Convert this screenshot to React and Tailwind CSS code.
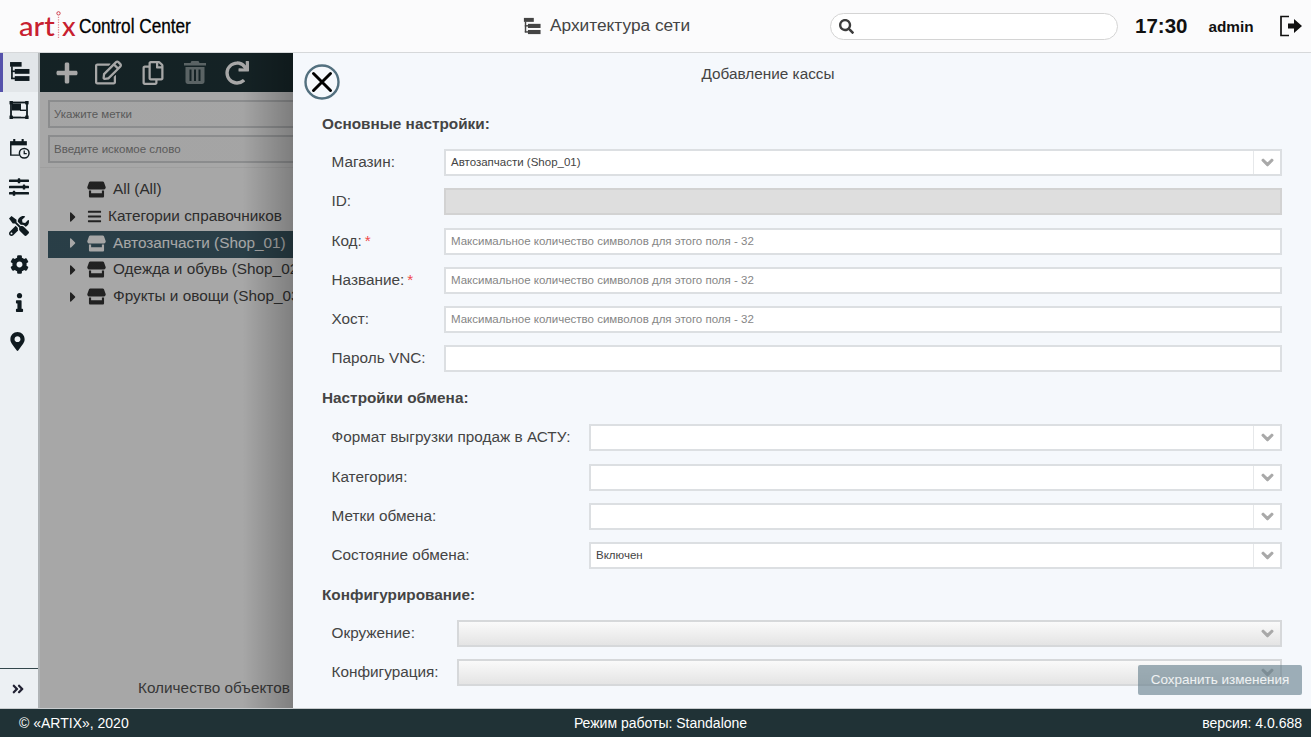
import React from "react";
import {
  FaPlus,
  FaRegEdit,
  FaRegCopy,
  FaRedo,
  FaSearch,
  FaSlidersH,
  FaTools,
  FaCog,
  FaInfo,
  FaMapMarkerAlt,
  FaAngleDoubleRight,
  FaChevronDown,
  FaCaretRight,
  FaBars,
} from "react-icons/fa";

const TreeIcon = ({ className }) => (
  <svg viewBox="0 0 20 20" className={className} fill="currentColor">
    <rect x="1" y="1" width="11" height="4.4" />
    <rect x="5.5" y="7.6" width="14" height="4.6" />
    <rect x="5.5" y="14.4" width="14" height="4.6" />
    <rect x="2" y="5" width="1.6" height="12" />
    <rect x="2" y="9" width="4" height="1.6" />
    <rect x="2" y="15.8" width="4" height="1.6" />
  </svg>
);

const LayersIcon = () => (
  <svg viewBox="0 0 20 20" className="w-[20px] h-[20px]">
    <rect x="2" y="2.5" width="16" height="15" fill="none" stroke="currentColor" strokeWidth="1.8" />
    <rect x="3" y="3.5" width="9" height="7" fill="currentColor" />
    <rect x="12" y="10.5" width="5" height="6" fill="#ecf0f3" />
    <rect x="11" y="9.6" width="6" height="1.4" fill="currentColor" />
    <rect x="0.5" y="1" width="3.4" height="3.4" fill="currentColor" />
    <rect x="16.2" y="1" width="3.4" height="3.4" fill="currentColor" />
    <rect x="0.5" y="15.6" width="3.4" height="3.4" fill="currentColor" />
    <rect x="16.2" y="15.6" width="3.4" height="3.4" fill="currentColor" />
  </svg>
);

const ScheduleIcon = () => (
  <svg viewBox="0 0 20 20" className="w-[21px] h-[21px]">
    <path d="M1 3h16v4H1z" fill="currentColor" />
    <path d="M4 1h2v3H4zM12 1h2v3h-2z" fill="currentColor" />
    <path d="M1.700 6v10.300H10" fill="none" stroke="currentColor" strokeWidth="1.400" />
    <circle cx="14.500" cy="14.500" r="4.600" fill="#ecf0f3" stroke="currentColor" strokeWidth="1.400" />
    <path d="M14.500 11.800v3h2.400" fill="none" stroke="currentColor" strokeWidth="1.200" />
  </svg>
);

const TrashIcon = ({ className }) => (
  <svg viewBox="0 0 22 24" className={className} fill="currentColor">
    <path d="M7.500 0.500h7l1 2H22v2.500H0V2.500h6.500z" />
    <path fillRule="evenodd" d="M1.500 6.500h19V21c0 1.500-1 2.500-2.500 2.500H4c-1.500 0-2.500-1-2.500-2.500zM5.500 9v11.500h2V9zM10 9v11.500h2V9zM14.500 9v11.500h2V9z" />
  </svg>
);

const StoreIcon = ({ className }) => (
  <svg viewBox="0 0 20 18" className={className} fill="currentColor">
    <path d="M3.400 0.500h13.200c.6 0 1 .3 1.300.8L19.800 6.500c0 1.500-1.300 2.500-2.600 2.500H2.800C1.500 9 .2 8 .2 6.500L2.100 1.300c.3-.5.7-.8 1.300-.8z" />
    <path d="M2 10h2.300v3h11.400v-3H18v6.200c0 .8-.6 1.300-1.300 1.300H3.300C2.600 17.500 2 17 2 16.200z" />
  </svg>
);

const LogoutIcon = () => (
  <svg viewBox="0 0 24 24" className="w-[24px] h-[24px]">
    <path d="M10 2.500H2v19h8" fill="none" stroke="#111" strokeWidth="1.700" />
    <path d="M9 9.500h6V5l8 7-8 7v-4.500H9z" fill="#111" />
  </svg>
);

const CloseIcon = () => (
  <svg viewBox="0 0 36 36" className="w-[36px] h-[36px]">
    <circle cx="18" cy="18" r="16.500" fill="none" stroke="#53707f" strokeWidth="2.400" />
    <path d="M9.500 9.500l17 17M26.500 9.500l-17 17" stroke="#000" strokeWidth="3" strokeLinecap="round" />
  </svg>
);

const sideItems = [
  <TreeIcon className="w-[21px] h-[21px]" />,
  <LayersIcon />,
  <ScheduleIcon />,
  <FaSlidersH className="text-[20px]" />,
  <FaTools className="text-[20px]" />,
  <FaCog className="text-[19px]" />,
  <FaInfo className="text-[19px]" />,
  <FaMapMarkerAlt className="text-[19px] mr-[3px]" />,
];

const Section = ({ children, className }) => (
  <div className={`h-[20px] pl-[29px] text-[15.330px] leading-[20px] font-bold text-[#444] ${className}`}>{children}</div>
);

const Label = ({ text, required, width }) => (
  <div className={`shrink-0 pl-[38.500px] text-[15.330px] text-[#444] ${width}`}>
    {text}
    {required && <span className="ml-[3px] text-[#f04a4a]">*</span>}
  </div>
);

const Chevron = () => <FaChevronDown className="text-[13px] text-[#a8a8a8] stroke-current stroke-[40]" />;

const InputRow = ({ label, required }) => (
  <div className="flex items-center h-[27px] mb-[12.300px]">
    <Label text={label} required={required} width="w-[151px]" />
    <div className="flex-1 h-full mr-[29px] bg-white border-2 border-[#dcdfe2] px-[5px] text-[11.500px] leading-[23px] text-[#858585]">
      Максимальное количество символов для этого поля - 32
    </div>
  </div>
);

const SelectRow = ({ label, value, width = "w-[151px]" }) => (
  <div className="flex items-center h-[27px] mb-[12.300px]">
    <Label text={label} width={width} />
    <div className="flex-1 h-full mr-[29px] flex bg-white border-2 border-[#dcdfe2] text-[11.500px] leading-[23px] text-[#444]">
      <div className="flex-1 px-[5px]">{value}</div>
      <div className="w-[27px] flex items-center justify-center border-l border-[#e6e8ea]">
        <Chevron />
      </div>
    </div>
  </div>
);

const DisabledSelect = ({ label }) => (
  <div className="flex items-center h-[27px] mb-[12.300px]">
    <Label text={label} width="w-[164px]" />
    <div className="flex-1 h-full mr-[29px] flex justify-end items-center pr-[6px] border-2 border-[#d6d8da] bg-linear-to-b from-[#fafafa] to-[#e4e4e4]">
      <Chevron />
    </div>
  </div>
);

const TreeRow = ({ label, selected, arrow = true, icon = "store" }) => (
  <div
    className={`flex items-center h-[26.700px] pb-[3px] text-[15.330px] whitespace-nowrap ${
      selected ? "bg-[#3f5f6c] text-white" : "text-[#444]"
    }`}
  >
    <div className="w-[33px] shrink-0 flex justify-end">
      {arrow && <FaCaretRight className={`text-[16px] ${selected ? "text-white" : "text-[#333]"}`} />}
    </div>
    {icon === "store" ? (
      <StoreIcon className={`w-[19px] h-[17px] ml-[6px] mr-[7px] shrink-0 ${selected ? "text-white" : "text-[#333]"}`} />
    ) : (
      <FaBars className="text-[15px] ml-[6px] mr-[6px] shrink-0 text-[#333]" />
    )}
    {label}
  </div>
);

export default function App() {
  return (
    <div className="w-[1311px] h-[737px] flex flex-col overflow-hidden bg-white font-['Liberation_Sans',Arial,sans-serif]">
      {/* Header */}
      <header className="h-[53px] shrink-0 flex items-center bg-[#fbfbfc] border-b border-[#d6d8da]">
        <div className="w-[500px] shrink-0 flex items-center pl-[19px]">
          <div className="flex items-center font-['Lato',sans-serif] font-medium text-[27px] leading-none text-[#c8202f] h-[30px] mt-[-2px]">
            <span className="origin-left scale-x-[1.08] w-[37px]">art</span>
            <svg viewBox="0 0 6 34" className="w-[5px] h-[34px]">
              <circle cx="3" cy="3" r="2" fill="none" stroke="#c8202f" strokeWidth="1" />
              <path d="M3 7v26" stroke="#e58a92" strokeWidth="1.500" strokeDasharray="1.500 1.500" />
            </svg>
            <span className="ml-[1px]">x</span>
          </div>
          <div className="ml-[3px] text-[20px] text-black origin-left scale-x-[0.86] whitespace-nowrap [-webkit-text-stroke:0.3px_black]">Control Center</div>
        </div>
        <div className="w-[330px] shrink-0 flex items-center pl-[23px] text-[17.300px] text-[#444]">
          <TreeIcon className="w-[18px] h-[18px] mr-[9px] text-[#444]" />
          Архитектура сети
        </div>
        <div className="w-[288px] h-[27px] shrink-0 flex items-center px-[8px] bg-white border border-[#d4d4d4] rounded-full">
          <FaSearch className="text-[15px] text-[#3d3d3d]" />
        </div>
        <div className="ml-[17px] text-[20.500px] font-bold text-[#111]">17:30</div>
        <div className="ml-[21px] text-[15.330px] font-bold text-[#111] mt-[3px]">admin</div>
        <div className="ml-[25px]">
          <LogoutIcon />
        </div>
      </header>

      <div className="flex-1 flex min-h-0">
        {/* Sidebar */}
        <aside className="w-[38px] shrink-0 flex flex-col bg-[#ecf0f3] text-[#0f1a1f]">
          {sideItems.map((icon, i) => (
            <div
              key={i}
              className={`h-[38.500px] flex items-center justify-center ${
                i === 0 ? "border-l-[3px] border-[#5552ab] bg-[#e2e6e9] pr-[3px] pb-[2px]" : "pb-[1px]"
              }`}
            >
              {icon}
            </div>
          ))}
          <div className="mt-auto h-[40px] border-t border-[#33474c] flex items-center pl-[11px]">
            <FaAngleDoubleRight className="text-[14px] text-[#223]" />
          </div>
        </aside>

        {/* Tree behind the dialog */}
        <div className="relative w-[255px] shrink-0 overflow-hidden bg-white flex flex-col border-l-2 border-[#b0b4b6]">
          <div className="h-[39px] shrink-0 flex items-center pl-[15px] bg-[#1f3438] text-white">
            <FaPlus className="text-[24px]" />
            <FaRegEdit className="text-[27px] ml-[16px]" />
            <FaRegCopy className="text-[24px] ml-[19px]" />
            <TrashIcon className="w-[22px] h-[25px] ml-[19px] text-[#8a9799]" />
            <FaRedo className="text-[24px] ml-[19px]" />
          </div>
          <div className="pl-[8px] pt-[8px] h-[76px] shrink-0 border-b border-[#f2f2f2] flex flex-col gap-[7px]">
            <div className="w-[300px] h-[28px] border-2 border-[#d4d6d8] px-[4px] text-[11.500px] leading-[24px] text-[#8a8a8a] bg-[#fbfbfb]">Укажите метки</div>
            <div className="w-[300px] h-[28px] border-2 border-[#d4d6d8] px-[4px] text-[11.500px] leading-[24px] text-[#8a8a8a] bg-[#fbfbfb]">Введите искомое слово</div>
          </div>
          <div className="pl-[8px] pt-[10px] flex-1">
            <TreeRow label="All (All)" arrow={false} />
            <TreeRow label="Категории справочников" icon="bars" />
            <TreeRow label="Автозапчасти (Shop_01)" selected />
            <TreeRow label="Одежда и обувь (Shop_02)" />
            <TreeRow label="Фрукты и овощи (Shop_03)" />
          </div>
          <div className="h-[43px] shrink-0 pl-[98px] text-[15.330px] text-[#555] whitespace-nowrap pt-[12px]">Количество объектов</div>
          {/* dim layer */}
          <div className="absolute inset-0 bg-linear-to-r from-[#00000058] via-[#00000058] via-80% to-[#00000080]" />
        </div>

        {/* Dialog */}
        <main className="relative flex-1 bg-[#f5f8fc] overflow-hidden">
          <div className="relative h-[61px]">
            <div className="absolute left-[11px] top-[11px]">
              <CloseIcon />
            </div>
            <div className="text-center text-[15.330px] text-[#444] pt-[10px] pr-[68px]">Добавление кассы</div>
          </div>
          <Section className="mb-[15px]">Основные настройки:</Section>
          <SelectRow label="Магазин:" value="Автозапчасти (Shop_01)" />
          <div className="flex items-center h-[27px] mb-[12.300px]">
            <Label text="ID:" width="w-[151px]" />
            <div className="flex-1 h-full mr-[29px] bg-[#dedede] border-2 border-[#d2d2d2]" />
          </div>
          <InputRow label="Код:" required />
          <InputRow label="Название:" required />
          <InputRow label="Хост:" />
          <div className="flex items-center h-[27px]">
            <Label text="Пароль VNC:" width="w-[151px]" />
            <div className="flex-1 h-full mr-[29px] bg-white border-2 border-[#dcdfe2]" />
          </div>
          <Section className="mt-[16px] mb-[16px]">Настройки обмена:</Section>
          <SelectRow label="Формат выгрузки продаж в АСТУ:" width="w-[296px]" />
          <SelectRow label="Категория:" width="w-[296px]" />
          <SelectRow label="Метки обмена:" width="w-[296px]" />
          <SelectRow label="Состояние обмена:" value="Включен" width="w-[296px]" />
          <Section className="mt-[15.300px] mb-[15px]">Конфигурирование:</Section>
          <DisabledSelect label="Окружение:" />
          <DisabledSelect label="Конфигурация:" />
          <button className="absolute right-[9px] bottom-[13px] w-[164px] h-[30px] rounded-[2px] bg-[#617b88]/60 text-[13.500px] text-white/85">
            Сохранить изменения
          </button>
        </main>
      </div>

      {/* Footer */}
      <footer className="h-[29px] shrink-0 flex items-center justify-between px-[9px] pl-[19px] bg-[#203236] border-t border-[#c8ccce] text-[14px] text-white">
        <div className="w-[300px]">© «ARTIX», 2020</div>
        <div>Режим работы: Standalone</div>
        <div className="w-[300px] text-right">версия: 4.0.688</div>
      </footer>
    </div>
  );
}
